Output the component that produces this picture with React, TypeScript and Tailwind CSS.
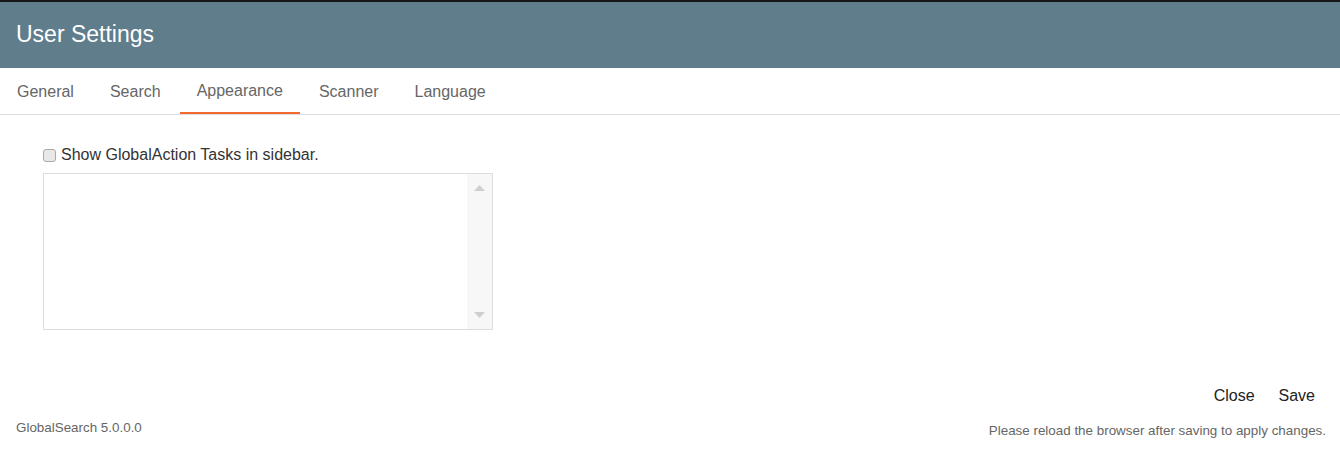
import { useState } from "react";

const tabs = ["General", "Search", "Appearance", "Scanner", "Language"];

const ListBox = () => {
    return (
        <div className="flex h-[157px] w-[450px] border border-[#dddddd] bg-white">
            <div className="flex-1" />
            <div className="flex w-[25px] flex-col items-center justify-between bg-[#f7f7f7] py-[11px]">
                <svg width="11" height="6" viewBox="0 0 11 6">
                    <polygon points="5.5,0 11,6 0,6" fill="#cfcfcf" />
                </svg>
                <svg width="11" height="6" viewBox="0 0 11 6">
                    <polygon points="0,0 11,0 5.5,6" fill="#cfcfcf" />
                </svg>
            </div>
        </div>
    );
};

const App = () => {
    const [active, setActive] = useState("Appearance");
    const [showTasks, setShowTasks] = useState(false);

    return (
        <div className="flex h-[457px] w-full flex-col bg-white font-['Liberation_Sans',Arial,sans-serif]">
            <div className="h-[2px] bg-[#161616]" />
            <header className="flex h-[66px] items-center bg-[#607d8b] px-4 pb-[1px]">
                <h1 className="text-[23px] text-white">User Settings</h1>
            </header>

            <nav className="flex h-[47px] gap-[2px] border-b border-[#dddddd]">
                {tabs.map((tab) => (
                    <button
                        key={tab}
                        onClick={() => setActive(tab)}
                        className={
                            tab === active
                                ? "border-b-2 border-[#f26a2e] px-[17px] pt-[1px] text-[16px] text-[#666666]"
                                : "border-b-2 border-transparent px-[17px] pt-[3px] text-[16px] text-[#666666]"
                        }
                    >
                        {tab}
                    </button>
                ))}
            </nav>

            <section className="flex flex-col gap-[6px] pl-[43px] pt-[28px]">
                <label className="flex items-center gap-[5px] text-[16px] text-[#333333]">
                    <input
                        type="checkbox"
                        checked={showTasks}
                        onChange={(e) => setShowTasks(e.target.checked)}
                        className="m-0 h-[13px] w-[13px] appearance-none rounded-[3px] border border-[#a9a9a9] bg-[#e8e8e8] checked:bg-[#607d8b]"
                    />
                    Show GlobalAction Tasks in sidebar.
                </label>
                <ListBox />
            </section>

            <footer className="mt-auto flex flex-col pb-[19px]">
                <div className="flex justify-end gap-[24px] pr-[25px]">
                    <button className="text-[16px] text-[#222222]">Close</button>
                    <button className="text-[16px] text-[#222222]">Save</button>
                </div>
                <div className="mt-[10px] flex items-end justify-between pl-4 pr-[14px]">
                    <span className="text-[13.4px] text-[#666666]">GlobalSearch 5.0.0.0</span>
                    <span className="translate-y-[3px] text-[13.4px] text-[#666666]">
                        Please reload the browser after saving to apply changes.
                    </span>
                </div>
            </footer>
        </div>
    );
};

export default App;
